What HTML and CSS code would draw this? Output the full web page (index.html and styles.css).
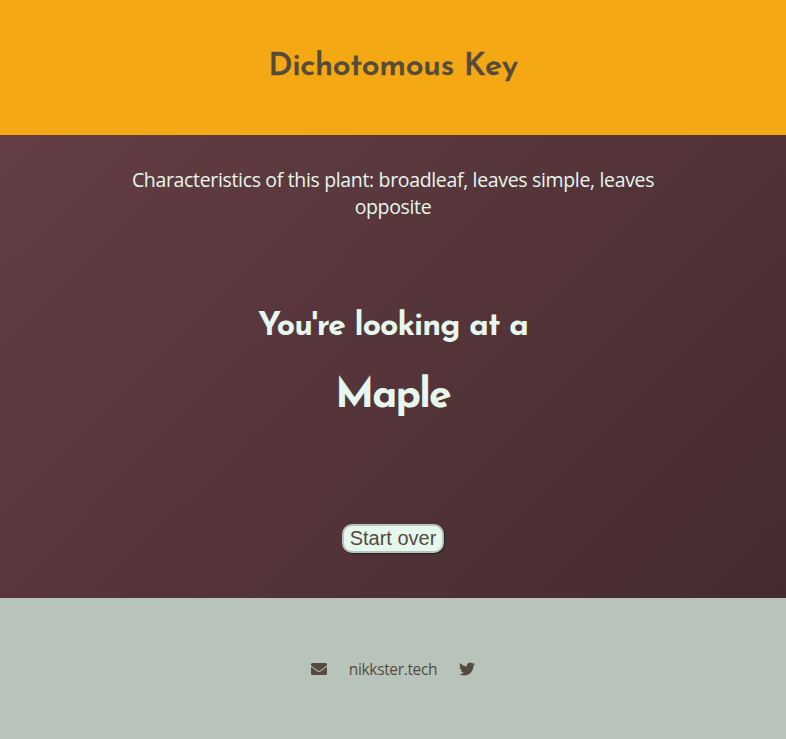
FILE: index.html
```html
<!DOCTYPE html>
<html lang="en">
<head>
<meta charset="utf-8">
<title>Dichotomous Key</title>
<link rel="stylesheet" href="styles.css">
</head>
<body>
<header class="header"><h1 class="title"><span>Dichotomous Key</span></h1></header>
<main class="main">
<p class="traits"><span class="line line-one">Characteristics of this plant: broadleaf, leaves simple, leaves</span> <span class="line line-two">opposite</span></p>
<h2 class="intro"><span>You're looking at a</span></h2>
<h2 class="result"><span>Maple</span></h2>
<button class="restart">Start over</button>
</main>
<footer class="footer">
<svg class="icon" viewBox="0 0 512 512"><path d="M502.3 190.8c3.9-3.1 9.7-.2 9.7 4.7V400c0 26.5-21.5 48-48 48H48c-26.5 0-48-21.5-48-48V195.6c0-5 5.7-7.8 9.7-4.7 22.4 17.4 52.1 39.5 154.1 113.6 21.1 15.4 56.7 47.8 92.2 47.6 35.7.3 72-32.8 92.3-47.6 102-74.1 131.6-96.3 154-113.7zM256 320c23.2.4 56.6-29.2 73.4-41.4 132.7-96.3 142.8-104.7 173.4-128.7 5.8-4.5 9.2-11.5 9.2-18.9v-19c0-26.5-21.5-48-48-48H48c-26.5 0-48 21.5-48 48v19c0 7.4 3.4 14.3 9.2 18.9 30.6 23.9 40.7 32.4 173.4 128.7 16.8 12.2 50.2 41.8 73.4 41.4z"/></svg>
<a class="site"><span>nikkster.tech</span></a>
<svg class="icon" viewBox="0 0 512 512"><path d="M459.37 151.716c.325 4.548.325 9.097.325 13.645 0 138.72-105.583 298.558-298.558 298.558-59.452 0-114.68-17.219-161.137-47.106 8.447.974 16.568 1.299 25.34 1.299 49.055 0 94.213-16.568 130.274-44.832-46.132-.975-84.792-31.188-98.112-72.772 6.498.974 12.995 1.624 19.818 1.624 9.421 0 18.843-1.3 27.614-3.573-48.081-9.747-84.143-51.98-84.143-102.985v-1.299c13.969 7.797 30.214 12.67 47.431 13.319-28.264-18.843-46.781-51.005-46.781-87.391 0-19.492 5.197-37.36 14.294-52.954 51.655 63.675 129.3 105.258 216.365 109.807-1.624-7.797-2.599-15.918-2.599-24.04 0-57.828 46.782-104.934 104.934-104.934 30.213 0 57.502 12.67 76.67 33.137 23.715-4.548 46.456-13.32 66.599-25.34-7.798 24.366-24.366 44.833-46.132 57.827 21.117-2.273 41.584-8.122 60.426-16.243-14.292 20.791-32.161 39.308-52.628 54.253z"/></svg>
</footer>
</body>
</html>
```
FILE: styles.css
```css
* { box-sizing: border-box; }
body { margin: 0; height: 739px; display: flex; flex-direction: column; font-family: "Open Sans", "Noto Sans", sans-serif; }
.header { height: 135px; background: #f4a814; color: #544b3d; display: flex; justify-content: center; padding-top: 45px; }
.title, .intro, .result { margin: 0; font-family: "Josefin Sans", Lato, sans-serif; font-weight: 700; white-space: nowrap; }
.title { font-size: 32px; line-height: 44px; font-weight: 600; letter-spacing: -0.35px; -webkit-text-stroke: 0.3px currentColor; }
.main { height: 463px; background: linear-gradient(135deg, #643e44, #452b2f); color: #e6f7ee; display: flex; flex-direction: column; align-items: center; }
.traits { margin: 31px 0 0; font-size: 19.5px; line-height: 27px; letter-spacing: -0.34px; text-align: center; }
.line { display: block; white-space: nowrap; }
.intro { font-size: 32px; line-height: 44px; margin-top: 85px; letter-spacing: -0.9px; }
.result { font-size: 41px; line-height: 56px; margin-top: 20px; letter-spacing: -1.9px; margin-right: 1px; }
.restart { margin-top: 99px; width: 102px; height: 29px; padding: 0 0 2px; border: 2px solid #b8c4bb; border-radius: 10px; background: #e6f7ee; color: #544b3d; font: 20px/22px "Liberation Sans", sans-serif; box-shadow: 1px 1px 1px #1d2723; }
.footer { height: 141px; background: #b8c4bb; color: #544b3d; display: flex; justify-content: center; align-items: center; gap: 22px; font-size: 15.5px; letter-spacing: -0.35px; }
.icon { width: 16px; height: 16px; fill: currentColor; }
```
